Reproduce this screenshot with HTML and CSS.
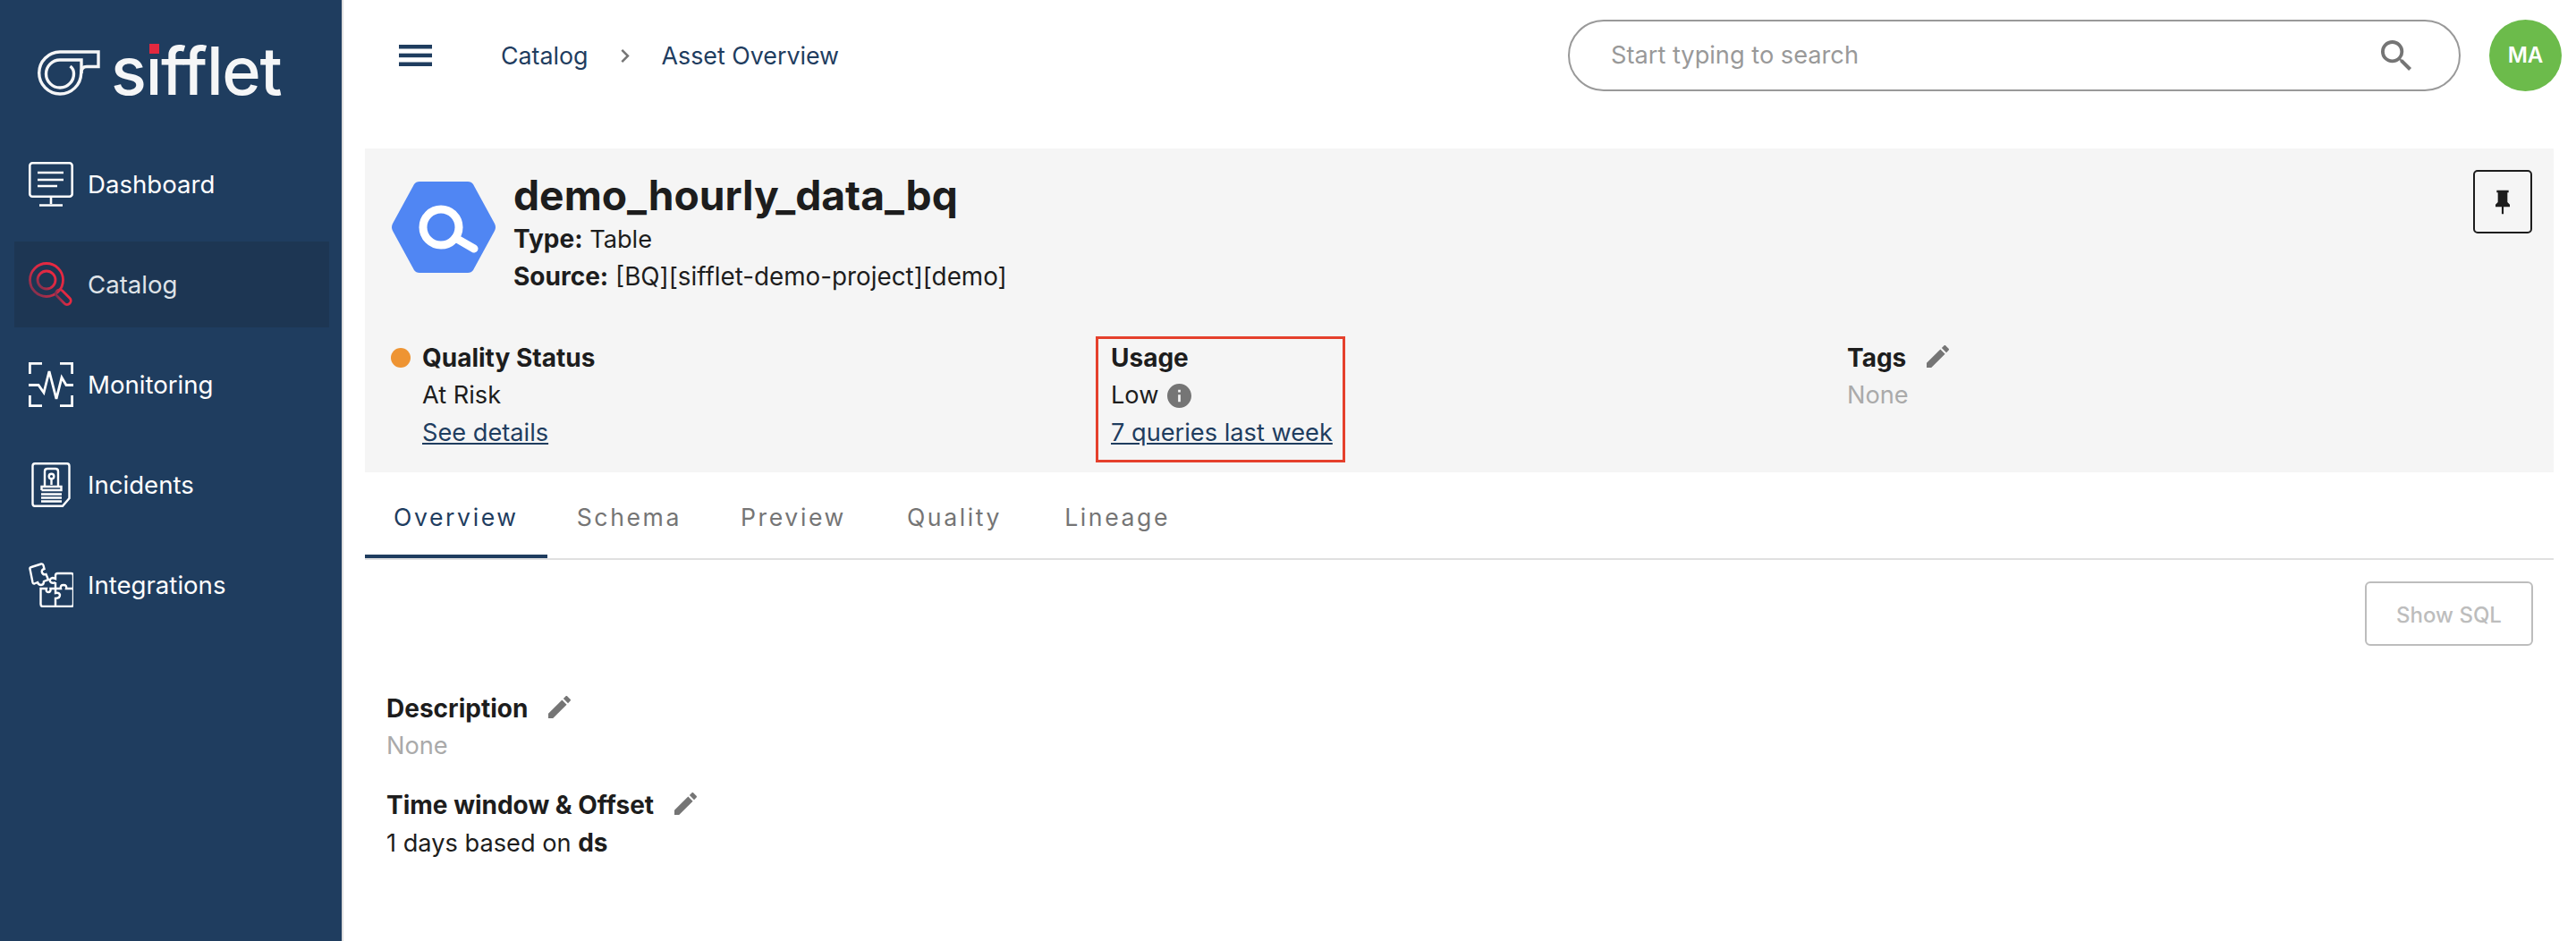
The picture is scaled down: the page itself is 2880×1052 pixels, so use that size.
FILE: index.html
```html
<!DOCTYPE html>
<html lang="en">
<head>
<meta charset="utf-8">
<title>Asset Overview</title>
<link rel="stylesheet" href="styles.css">
</head>
<body>
<div class="app">
  <aside class="sidebar">
    <div class="brand">
      <svg class="brand-mark" viewBox="0 0 76 54" fill="none" stroke="#f5f6f7" stroke-width="3.400">
        <path d="M70 3H27A23.500 23.500 0 1 0 50.700 27C50.700 22 53 19.500 57 19.500H70Z"/>
        <path d="M51 27V12H27A15.500 15.500 0 1 0 42.500 27C42.500 24 41 21 38.500 19"/>
      </svg>
      <div class="brand-word">sifflet<span class="brand-dot"></span></div>
    </div>
    <nav class="nav">
      <a class="nav-item">
        <svg class="nav-icon" viewBox="0 0 50 50" fill="none" stroke="#fff" stroke-width="2.600">
          <rect x="1.300" y="1.300" width="47.400" height="37.400" rx="3"/>
          <path d="M10 12H39M10 20H39M10 27H32M25 39V47M12 48.500H38"/>
        </svg>
        <span>Dashboard</span>
      </a>
      <a class="nav-item nav-item-active">
        <svg class="nav-icon" viewBox="0 0 50 50" fill="none" stroke="url(#catalogGrad)" stroke-width="2.800">
          <defs>
            <linearGradient id="catalogGrad" x1="1" y1="0" x2="0" y2="1">
              <stop offset="0" stop-color="#f0283f"/>
              <stop offset="0.55" stop-color="#d42a45"/>
              <stop offset="1" stop-color="#6b3350"/>
            </linearGradient>
          </defs>
          <circle cx="20" cy="20" r="18.500"/>
          <circle cx="20" cy="20" r="10"/>
          <rect x="29" y="35" width="20" height="8.500" rx="4.200" transform="rotate(45 39 39)"/>
        </svg>
        <span>Catalog</span>
      </a>
      <a class="nav-item">
        <svg class="nav-icon" viewBox="0 0 50 50" fill="none" stroke="#fff" stroke-width="2.800">
          <path d="M1.400 13V1.400H15M35 1.400H48.600V13M1.400 37V48.600H15M35 48.600H48.600V37"/>
          <path d="M0 25.500H11L17 34 23 10 31 41 37 17 42 25.500H50"/>
        </svg>
        <span>Monitoring</span>
      </a>
      <a class="nav-item">
        <svg class="nav-icon" viewBox="0 0 50 50" fill="none" stroke="#fff" stroke-width="2.400">
          <path d="M7 1.300H43Q45.500 1.300 45.500 4V40L38 48.700H7Q4.500 48.700 4.500 46V4Q4.500 1.300 7 1.300Z"/>
          <path d="M18 27V10Q18 7 21 7H30Q33 7 33 10V27M14.500 31V27H36.500V31H14.500M14 35.500H37M14 39.500H37M14 43.500H37"/>
          <circle cx="25.500" cy="15.500" r="2.800"/>
          <path d="M25.500 18V25"/>
        </svg>
        <span>Incidents</span>
      </a>
      <a class="nav-item">
        <svg class="nav-icon" viewBox="0 0 50 50" fill="none" stroke="#fff" stroke-width="2.400">
          <path d="M1.500 7Q1 5.500 3 5L14 1.500Q16 1 16.500 3L17.500 7Q14 8 15 11 16 14 19.500 13L22 19 17 21Q17 25 14 25 11 25 10 22L6.500 23.500Q5 24 4.500 22Z"/>
          <path d="M30 22Q26 24 24 21 23 18 27 17L30 18V14.500Q30 12 32.500 12H47.500Q50 12 50 14.500V46.500Q50 49 47.500 49H16Q13.500 49 13.500 46.500V29H20Q19 33 22 33 25 33 24.500 29H30V22"/>
          <path d="M30 29H36Q35 25 39 25 43 25 42 29H50M30 29V34Q34 33 35 36 35 40 30 40V49"/>
        </svg>
        <span>Integrations</span>
      </a>
    </nav>
  </aside>
  <main class="main">
    <header class="topbar">
      <svg class="burger" viewBox="0 0 37 24" fill="#1f3d5f">
        <rect width="37" height="4.500"/>
        <rect y="9.700" width="37" height="4.500"/>
        <rect y="19.500" width="37" height="4.500"/>
      </svg>
      <div class="crumbs">
        <span>Catalog</span>
        <svg class="crumb-sep" viewBox="8.500 6 7.500 12" fill="#757575"><path d="M8.590 16.590 13.170 12 8.590 7.410 10 6l6 6-6 6z"/></svg>
        <span>Asset Overview</span>
      </div>
      <div class="search">
        <span class="search-text">Start typing to search</span>
        <svg class="search-icon" viewBox="3 3 18 18" fill="#757575"><path d="M15.500 14h-.79l-.28-.27A6.470 6.470 0 0 0 16 9.500 6.500 6.500 0 1 0 9.500 16c1.610 0 3.090-.59 4.230-1.570l.27.28v.79l5 4.990L20.490 19l-4.990-5zm-6 0C7.010 14 5 11.990 5 9.500S7.010 5 9.500 5 14 7.010 14 9.500 11.990 14 9.500 14z"/></svg>
      </div>
      <div class="avatar">MA</div>
    </header>

    <section class="asset">
      <div class="asset-head">
        <svg class="hex" viewBox="0 0 118 104">
          <path d="M26 4Q28 1 32 1H86Q90 1 92 4L116 48Q118 52 116 56L92 100Q90 103 86 103H32Q28 103 26 100L2 56Q0 52 2 48Z" fill="#5086f3"/>
          <circle cx="56" cy="52" r="20" fill="none" stroke="#fff" stroke-width="9"/>
          <path d="M72 64 93 76" stroke="#fff" stroke-width="9" stroke-linecap="round"/>
        </svg>
        <div class="asset-id">
          <h1 class="asset-title">demo_hourly_data_bq</h1>
          <div class="line"><b>Type:</b> Table</div>
          <div class="line line-source"><b>Source:</b> [BQ][sifflet-demo-project][demo]</div>
        </div>
        <button class="pin">
          <svg class="pin-icon" viewBox="0 0 24 24" fill="#1d1d1d"><path d="M16 12V4h1V2H7v2h1v8l-2 2v2h5.200v6h1.600v-6H18v-2z"/></svg>
        </button>
      </div>
      <div class="asset-meta">
        <div class="meta-col meta-quality">
          <span class="dot"></span>
          <div>
            <div class="line"><b>Quality Status</b></div>
            <div class="line">At Risk</div>
            <div class="line"><a class="link">See details</a></div>
          </div>
        </div>
        <div class="meta-col meta-usage">
          <div class="usage-box">
            <div class="line"><b>Usage</b></div>
            <div class="line line-icon">Low
              <svg class="info" viewBox="2 2 20 20" fill="#757575"><path d="M12 2C6.480 2 2 6.480 2 12s4.480 10 10 10 10-4.480 10-10S17.520 2 12 2zm1 15h-2v-6h2v6zm0-8h-2V7h2v2z"/></svg>
            </div>
            <div class="line"><a class="link">7 queries last week</a></div>
          </div>
        </div>
        <div class="meta-col meta-tags">
          <div class="line line-icon"><b>Tags</b>
            <svg class="pencil" viewBox="3 3 18 18" fill="#757575"><path d="M3 17.250V21h3.750L17.810 9.940l-3.750-3.750L3 17.250zM20.710 7.040c.39-.39.39-1.020 0-1.410l-2.340-2.340c-.39-.39-1.020-.39-1.410 0l-1.830 1.830 3.750 3.750 1.830-1.830z"/></svg>
          </div>
          <div class="line muted">None</div>
        </div>
      </div>
    </section>

    <div class="tabs">
      <a class="tab tab-active">Overview</a>
      <a class="tab">Schema</a>
      <a class="tab">Preview</a>
      <a class="tab tab-quality">Quality</a>
      <a class="tab">Lineage</a>
    </div>

    <div class="tab-actions"><button class="sql">Show SQL</button></div>

    <section class="details">
      <div class="line line-icon"><b>Description</b>
        <svg class="pencil" viewBox="3 3 18 18" fill="#757575"><path d="M3 17.250V21h3.750L17.810 9.940l-3.750-3.750L3 17.250zM20.710 7.040c.39-.39.39-1.020 0-1.410l-2.340-2.340c-.39-.39-1.020-.39-1.410 0l-1.830 1.830 3.750 3.750 1.830-1.830z"/></svg>
      </div>
      <div class="line muted">None</div>
      <div class="line line-icon detail-gap"><b>Time window &amp; Offset</b>
        <svg class="pencil" viewBox="3 3 18 18" fill="#757575"><path d="M3 17.250V21h3.750L17.810 9.940l-3.750-3.750L3 17.250zM20.710 7.040c.39-.39.39-1.020 0-1.410l-2.340-2.340c-.39-.39-1.020-.39-1.410 0l-1.830 1.830 3.750 3.750 1.830-1.830z"/></svg>
      </div>
      <div class="line">1 days based on <b>ds</b></div>
    </section>
  </main>
</div>
</body>
</html>
```

FILE: styles.css
```css
* { box-sizing: border-box; }
html, body { margin: 0; height: 100%; }
body {
  font-family: Inter, "Liberation Sans", sans-serif;
  font-size: 27.200px;
  line-height: 42px;
  color: #1d1d1d;
  background: #fff;
  overflow: hidden;
}
.app { display: flex; height: 1052px; }

.sidebar {
  width: 384px;
  flex: none;
  background: #1f3d5f;
  border-right: 2px solid #dedede;
  padding: 0 14px 0 16px;
}
.brand { height: 158px; display: flex; align-items: flex-start; padding: 50px 0 0 24px; }
.brand-mark { width: 76px; height: 54px; margin-top: 5px; flex: none; }
.brand-word {
  position: relative;
  margin-left: 8px;
  font-size: 74px;
  line-height: 58px;
  font-weight: 500;
  color: #f5f6f7;
  letter-spacing: -1.200px;
}
.brand-dot {
  position: absolute;
  left: 43px;
  top: -1px;
  width: 11px;
  height: 11px;
  background: #e2293f;
}
.nav { display: flex; flex-direction: column; gap: 16px; }
.nav-item {
  height: 96px;
  display: flex;
  align-items: center;
  gap: 16px;
  padding-left: 16px;
  font-size: 27.600px;
  color: #fff;
}
.nav-item-active { background: #1d3653; color: #dfe3e8; }
.nav-icon { width: 50px; height: 50px; flex: none; }

.main { flex: 1; min-width: 0; }
.topbar { height: 124px; display: flex; align-items: center; padding: 0 16px 0 62px; margin-bottom: 42px; }
.burger { width: 37px; height: 24px; flex: none; }
.crumbs { display: flex; align-items: center; margin-left: 77px; font-size: 26.800px; color: #1f3d5f; }
.crumb-sep { width: 10px; height: 15px; margin: 0 36px; }
.search {
  margin-left: auto;
  width: 998px;
  height: 80px;
  border: 2px solid #999;
  border-radius: 40px;
  display: flex;
  align-items: center;
  justify-content: space-between;
  padding: 0 52px 0 46px;
}
.search-text { color: #999; }
.search-icon { width: 35px; height: 35px; }
.avatar {
  margin-left: 32px;
  width: 81px;
  height: 80px;
  border-radius: 50%;
  background: #6cbb4b;
  color: #fff;
  font-size: 24px;
  font-weight: 600;
  display: flex;
  align-items: center;
  justify-content: center;
}

.asset { margin: 0 25px 0 24px; background: #f5f5f5; padding: 24px 24px 11px 29px; }
.asset-head { display: flex; }
.hex { width: 118px; height: 104px; margin-top: 12px; flex: none; }
.asset-id { margin-left: 19px; flex: 1; }
.asset-title { margin: 0; font-size: 46.200px; line-height: 56px; font-weight: 700; }
.line { height: 42px; }
.line-source { font-size: 27.800px; }
.line b { font-size: 28px; font-weight: 700; }
.pin {
  width: 66px;
  height: 71px;
  flex: none;
  padding: 0;
  background: transparent;
  border: 2px solid #1d1d1d;
  border-radius: 5px;
  display: flex;
  align-items: center;
  justify-content: center;
}
.pin-icon { width: 32px; height: 32px; }
.asset-meta { display: flex; margin-top: 46px; }
.meta-col { flex: none; }
.meta-quality { width: 788px; display: flex; padding-top: 3px; }
.dot { width: 22px; height: 22px; margin: 10px 13px 0 0; border-radius: 50%; background: #ee9433; flex: none; }
.meta-usage { width: 840px; }
.usage-box { width: 279px; height: 141px; border: 3px solid #e5402c; padding-left: 14px; }
.meta-tags { padding-top: 3px; }
.line-icon { display: flex; align-items: center; }
.link { color: #1f3d5f; text-decoration: underline; }
.muted { color: #aaa; }
.info { width: 27px; height: 27px; margin-left: 10px; }
.pencil { width: 25px; height: 25px; margin-left: 23px; margin-top: -4px; }

.tabs {
  margin: 0 25px 0 24px;
  height: 98px;
  display: flex;
  border-bottom: 2px solid #e0e0e0;
}
.tab {
  height: 96px;
  padding: 4px 33px 0;
  display: flex;
  align-items: center;
  font-size: 26.600px;
  letter-spacing: 2.600px;
  color: #757575;
}
.tab-active { padding: 4px 32px 0; color: #1f3d5f; box-shadow: inset 0 -4px 0 #1f3d5f; }
.tab-quality { padding: 4px 37px 0 35px; }

.tab-actions { display: flex; justify-content: flex-end; padding: 24px 48px 0 0; }
.sql {
  width: 188px;
  height: 72px;
  padding: 3px 0 0;
  background: #fff;
  border: 2px solid #bdbdbd;
  border-radius: 6px;
  color: #bdbdbd;
  font-family: Inter, "Liberation Sans", sans-serif;
  font-size: 24px;
  font-weight: 500;
}
.details { margin: 49px 0 0 48px; }
.detail-gap { margin-top: 24px; }
```
